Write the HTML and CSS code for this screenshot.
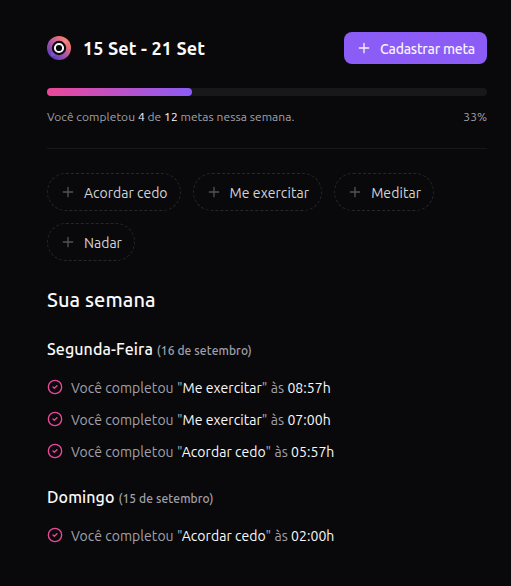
FILE: index.html
```html
<!DOCTYPE html>
<html lang="pt-BR">
<head>
<meta charset="utf-8">
<title>Metas da semana</title>
<link rel="stylesheet" href="styles.css">
</head>
<body>
<svg class="defs" width="0" height="0" aria-hidden="true">
  <symbol id="plus" viewBox="0 0 24 24"><path d="M5 12h14M12 5v14"/></symbol>
  <symbol id="check" viewBox="0 0 24 24"><circle cx="12" cy="12" r="10"/><path d="m9 12 2 2 4-4"/></symbol>
</svg>
<main class="page">
  <header class="header">
    <div class="brand">
      <svg class="logo" viewBox="0 0 24 24">
        <defs>
          <linearGradient id="ring" x1="20" y1="4" x2="5" y2="21" gradientUnits="userSpaceOnUse">
            <stop offset="0" stop-color="#ff7b59"/><stop offset=".48" stop-color="#b958a3"/><stop offset="1" stop-color="#5b3fbc"/>
          </linearGradient>
          <linearGradient id="arc" x1="3" y1="18" x2="16" y2="3" gradientUnits="userSpaceOnUse">
            <stop offset="0" stop-color="#703eb5"/><stop offset="1" stop-color="#f0768a"/>
          </linearGradient>
        </defs>
        <circle cx="12" cy="12" r="12" fill="url(#ring)"/>
        <path d="M6 18.5A9 9 0 0 1 17.8 5.5" fill="none" stroke="url(#arc)" stroke-width="4"/>
        <circle cx="17.8" cy="6" r="2.3" fill="#f28291"/>
        <circle cx="6" cy="18" r="2.3" fill="#8251d0"/>
        <circle cx="12" cy="12" r="7.2" fill="#09090b"/>
        <circle cx="12" cy="12" r="4.1" fill="none" stroke="#fafafa" stroke-width="2"/>
      </svg>
      <h1 class="range">15 Set - 21 Set</h1>
    </div>
    <button class="create"><svg class="icon"><use href="#plus"/></svg><span>Cadastrar meta</span></button>
  </header>
  <section class="progress">
    <div class="track"><div class="fill"></div></div>
    <div class="summary"><span class="done">Você completou <b>4</b> de <b>12</b> metas nessa semana.</span><span>33%</span></div>
  </section>
  <div class="separator"></div>
  <div class="goals">
    <button class="goal"><svg class="icon"><use href="#plus"/></svg><span>Acordar cedo</span></button>
    <button class="goal wide"><svg class="icon"><use href="#plus"/></svg><span>Me exercitar</span></button>
    <button class="goal wide"><svg class="icon"><use href="#plus"/></svg><span>Meditar</span></button>
    <button class="goal"><svg class="icon"><use href="#plus"/></svg><span>Nadar</span></button>
  </div>
  <h2 class="week">Sua semana</h2>
  <section class="day">
    <h3>Segunda-Feira <small>(16 de setembro)</small></h3>
    <ul>
      <li><svg class="icon"><use href="#check"/></svg><span>Você completou "<b>Me exercitar</b>" às <b>08:57h</b></span></li>
      <li><svg class="icon"><use href="#check"/></svg><span>Você completou "<b>Me exercitar</b>" às <b>07:00h</b></span></li>
      <li><svg class="icon"><use href="#check"/></svg><span>Você completou "<b>Acordar cedo</b>" às <b>05:57h</b></span></li>
    </ul>
  </section>
  <section class="day">
    <h3>Domingo <small>(15 de setembro)</small></h3>
    <ul>
      <li><svg class="icon"><use href="#check"/></svg><span>Você completou "<b>Acordar cedo</b>" às <b>02:00h</b></span></li>
    </ul>
  </section>
</main>
</body>
</html>
```
FILE: styles.css
```css
* { box-sizing: border-box; margin: 0; padding: 0; }
body { background: #09090b; color: #fafafa; font-family: Ubuntu, "Noto Sans", sans-serif; }
.defs { position: absolute; }
.page { width: 440px; margin: 32px 0 0 47px; display: flex; flex-direction: column; gap: 24px; }
button { font: inherit; white-space: nowrap; }
.icon { width: 16px; height: 16px; flex: none; fill: none; stroke: currentColor; stroke-width: 2; stroke-linecap: round; stroke-linejoin: round; }
.header, .brand, .create, .goal, .summary, li { display: flex; align-items: center; }
.header { justify-content: space-between; height: 32px; }
.brand { gap: 12px; }
.logo { width: 24px; height: 24px; }
.range { font-size: 18px; line-height: 28px; font-weight: 600; letter-spacing: 0.13px; white-space: nowrap; }
.create { height: 32px; width: 143px; gap: 8px; padding: 0 12px; border: 0; border-radius: 8px; background: #8b5cf6; color: #f5f3ff; font-size: 14px; line-height: 20px; font-weight: 500; letter-spacing: -0.25px; }
.create span, .goal span, .summary span, li span { padding-top: 2px; }
.progress { display: flex; flex-direction: column; gap: 12px; }
.track { height: 8px; border-radius: 4px; background: #18181b; }
.fill { width: 33%; height: 8px; border-radius: 4px; background: linear-gradient(90deg, #ec4899, #8b5cf6); }
.summary { justify-content: space-between; height: 16px; font-size: 12px; line-height: 16px; color: #a1a1aa; }
.done { letter-spacing: 0.05px; }
b { font-weight: 400; color: #fafafa; }
.separator { height: 1px; background: #18181b; }
.goals { display: flex; flex-wrap: wrap; gap: 12px; }
.goal { height: 38px; padding: 0 12px; gap: 8px; border: 1px dashed #27272a; border-radius: 19px; background: transparent; color: #d4d4d8; font-size: 14px; line-height: 20px; }
.wide { letter-spacing: 0.08px; }
.goal .icon { color: #52525b; }
.week { font-size: 20px; line-height: 28px; height: 28px; padding-top: 1px; font-weight: 500; letter-spacing: 0.1px; }
.day { display: flex; flex-direction: column; gap: 16px; }
h3 { font-size: 16px; line-height: 24px; height: 24px; font-weight: 500; letter-spacing: 0.1px; white-space: nowrap; }
small { font-size: 12px; color: #a1a1aa; }
ul { list-style: none; display: flex; flex-direction: column; gap: 12px; }
li { height: 20px; gap: 8px; font-size: 14px; line-height: 20px; color: #a1a1aa; letter-spacing: 0.05px; white-space: nowrap; }
li .icon { color: #ec4899; }
```
